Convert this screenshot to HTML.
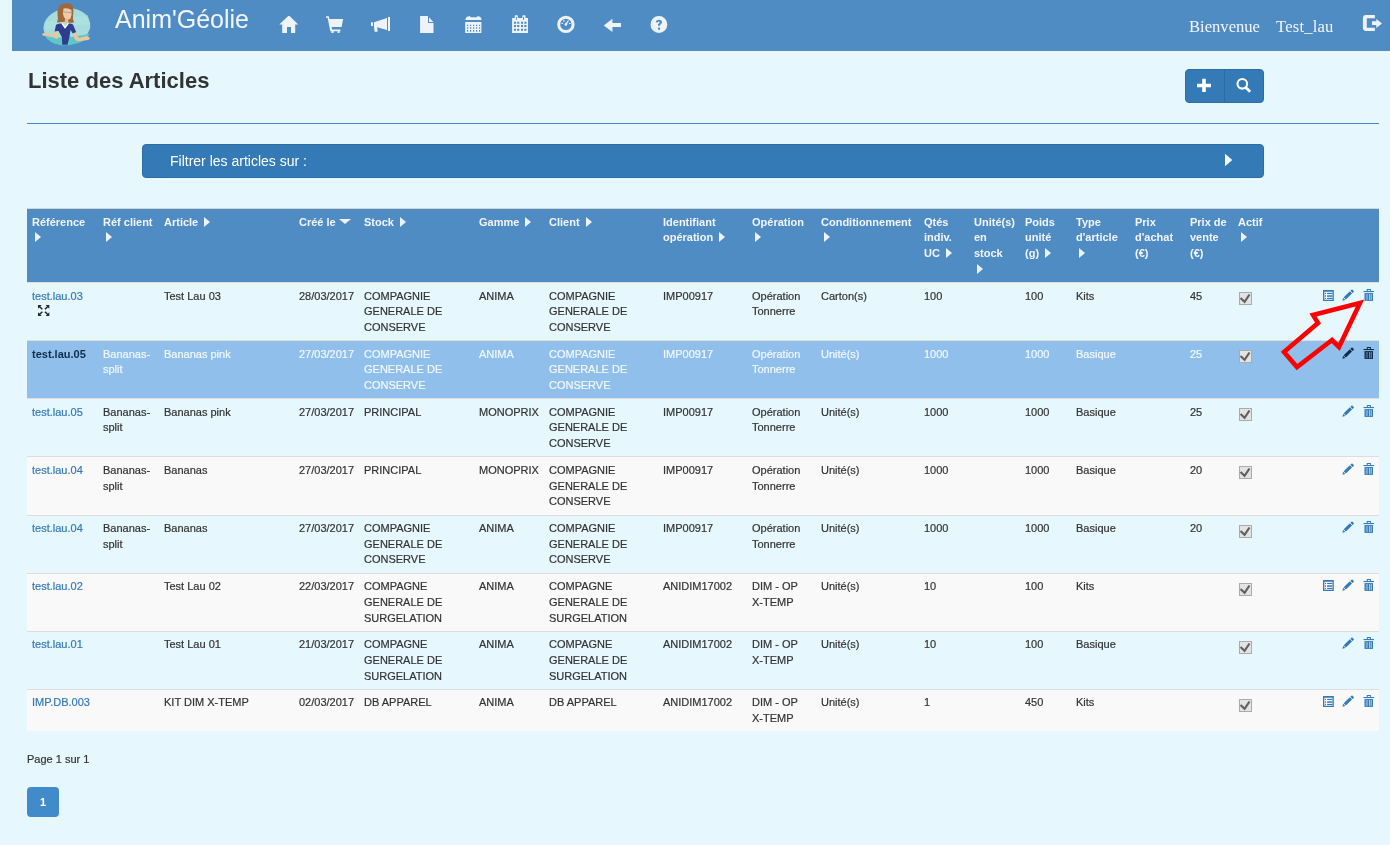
<!DOCTYPE html>
<html><head><meta charset="utf-8">
<style>
*{box-sizing:border-box;}
html,body{margin:0;padding:0;}
body{width:1390px;height:845px;overflow:hidden;background:#e6f8fe;font-family:"Liberation Sans",sans-serif;color:#333;position:relative;font-size:11px;}
.nav{position:absolute;left:12px;top:0;width:1378px;height:51px;background:#508cc4;}
.brand{position:absolute;left:103px;top:4px;font-size:25px;color:#f2f5fa;line-height:30px;white-space:nowrap;}
.welcome{position:absolute;top:17px;font-family:"Liberation Serif",serif;font-size:16.6px;color:#f2f5fa;white-space:nowrap;line-height:20px;}
h1{position:absolute;left:28px;top:66px;margin:0;font-size:22px;font-weight:bold;color:#333;line-height:30px;white-space:nowrap;}
.btng{position:absolute;left:1185px;top:69px;width:79px;height:34px;border:1px solid #2e6da4;border-radius:4px;background:#337ab7;}
.btng .dv{position:absolute;left:38px;top:0;width:1px;height:32px;background:#2e6da4;}
.hr{position:absolute;left:27px;top:123px;width:1352px;height:1px;background:#4a8ac4;}
.filter{position:absolute;left:142px;top:144px;width:1122px;height:34px;background:#337ab7;border:1px solid #2e6da4;border-radius:4px;color:#fff;font-size:14px;}
.filter span{position:absolute;left:27px;top:8px;line-height:17px;white-space:nowrap;}
table{position:absolute;left:27px;top:208px;width:1352px;border-collapse:collapse;table-layout:fixed;}
th,td{padding:5.75px 5px 4.25px 5px;vertical-align:top;text-align:left;line-height:15.71px;font-size:11px;white-space:nowrap;}
th{background:#508cc4;color:#f2f5fa;font-weight:bold;border-top:1px solid #d6d4d2;}
td{border-top:1px solid #dddddd;}
tr.odd td{background:#e6f8fe;}
tr.even td{background:#f9f9f9;}
tr.sel td{background:#8fbfea;color:#f2f8fd;}
tr.sel td.ref{color:#0f2c4c;font-weight:bold;-webkit-text-stroke:0;}
a{color:#337ab7;text-decoration:none;}
.tri{display:inline-block;width:0;height:0;border-top:5.5px solid transparent;border-bottom:5.5px solid transparent;border-left:6px solid #eef3f9;vertical-align:-1px;margin-left:3px;}
.trid{display:inline-block;width:0;height:0;border-left:6px solid transparent;border-right:6px solid transparent;border-top:5px solid #eef3f9;vertical-align:2px;}
.cb{display:block;width:13px;height:13px;border:1px solid #b3b3b3;background:#e3e3e3;margin-top:2px;margin-left:1px;position:relative;}
.cb svg{position:absolute;left:0;top:0;}
.acts{position:relative;height:16px;}
.acts svg{position:absolute;top:3px;}
.page{position:absolute;left:27px;top:752px;line-height:15px;font-size:11px;color:#333;}
.pg{position:absolute;left:27px;top:787px;width:32px;height:30px;background:#428bca;border-radius:4px;color:#fff;font-weight:bold;font-size:11px;text-align:center;line-height:30px;}
#ov{position:absolute;left:0;top:0;}
body>*{will-change:transform;}
td,.page{-webkit-text-stroke:0.2px currentColor;}
</style></head><body>
<div class="nav">
  <div class="brand">Anim'Géolie</div>
</div>
<div class="welcome" style="left:1189px">Bienvenue</div>
<div class="welcome" style="left:1275.5px;letter-spacing:0.2px">Test_lau</div>
<h1>Liste des Articles</h1>
<div class="btng"><div class="dv"></div></div>
<div class="hr"></div>
<div class="filter"><span>Filtrer les articles sur :</span></div>

<table>
<colgroup>
<col style="width:71px"><col style="width:61px"><col style="width:135px"><col style="width:65px"><col style="width:115px"><col style="width:70px"><col style="width:114px"><col style="width:89px"><col style="width:69px"><col style="width:103px"><col style="width:50px"><col style="width:51px"><col style="width:51px"><col style="width:59px"><col style="width:55px"><col style="width:48px"><col style="width:46px"><col>
</colgroup>
<thead><tr>
<th>Référence<br><span class="tri"></span></th>
<th>Réf client<br><span class="tri"></span></th>
<th>Article <span class="tri"></span></th>
<th>Créé le <span class="trid"></span></th>
<th>Stock <span class="tri"></span></th>
<th>Gamme <span class="tri"></span></th>
<th>Client <span class="tri"></span></th>
<th>Identifiant<br>opération <span class="tri"></span></th>
<th>Opération<br><span class="tri"></span></th>
<th>Conditionnement<br><span class="tri"></span></th>
<th>Qtés<br>indiv.<br>UC <span class="tri"></span></th>
<th>Unité(s)<br>en<br>stock<br><span class="tri"></span></th>
<th>Poids<br>unité<br>(g) <span class="tri"></span></th>
<th>Type<br>d'article<br><span class="tri"></span></th>
<th>Prix<br>d'achat<br>(€)</th>
<th>Prix de<br>vente<br>(€)</th>
<th>Actif<br><span class="tri"></span></th>
<th></th>
</tr></thead>
<tbody>
<tr class="odd"><td class="ref"><a>test.lau.03</a></td><td></td><td>Test Lau 03</td><td>28/03/2017</td><td>COMPAGNIE<br>GENERALE DE<br>CONSERVE</td><td>ANIMA</td><td>COMPAGNIE<br>GENERALE DE<br>CONSERVE</td><td>IMP00917</td><td>Opération<br>Tonnerre</td><td>Carton(s)</td><td>100</td><td></td><td>100</td><td>Kits</td><td></td><td>45</td><td></td><td></td></tr>
<tr class="sel"><td class="ref">test.lau.05</td><td>Bananas-<br>split</td><td>Bananas pink</td><td>27/03/2017</td><td>COMPAGNIE<br>GENERALE DE<br>CONSERVE</td><td>ANIMA</td><td>COMPAGNIE<br>GENERALE DE<br>CONSERVE</td><td>IMP00917</td><td>Opération<br>Tonnerre</td><td>Unité(s)</td><td>1000</td><td></td><td>1000</td><td>Basique</td><td></td><td>25</td><td></td><td></td></tr>
<tr class="odd"><td class="ref"><a>test.lau.05</a></td><td>Bananas-<br>split</td><td>Bananas pink</td><td>27/03/2017</td><td>PRINCIPAL</td><td>MONOPRIX</td><td>COMPAGNIE<br>GENERALE DE<br>CONSERVE</td><td>IMP00917</td><td>Opération<br>Tonnerre</td><td>Unité(s)</td><td>1000</td><td></td><td>1000</td><td>Basique</td><td></td><td>25</td><td></td><td></td></tr>
<tr class="even"><td class="ref"><a>test.lau.04</a></td><td>Bananas-<br>split</td><td>Bananas</td><td>27/03/2017</td><td>PRINCIPAL</td><td>MONOPRIX</td><td>COMPAGNIE<br>GENERALE DE<br>CONSERVE</td><td>IMP00917</td><td>Opération<br>Tonnerre</td><td>Unité(s)</td><td>1000</td><td></td><td>1000</td><td>Basique</td><td></td><td>20</td><td></td><td></td></tr>
<tr class="odd"><td class="ref"><a>test.lau.04</a></td><td>Bananas-<br>split</td><td>Bananas</td><td>27/03/2017</td><td>COMPAGNIE<br>GENERALE DE<br>CONSERVE</td><td>ANIMA</td><td>COMPAGNIE<br>GENERALE DE<br>CONSERVE</td><td>IMP00917</td><td>Opération<br>Tonnerre</td><td>Unité(s)</td><td>1000</td><td></td><td>1000</td><td>Basique</td><td></td><td>20</td><td></td><td></td></tr>
<tr class="even"><td class="ref"><a>test.lau.02</a></td><td></td><td>Test Lau 02</td><td>22/03/2017</td><td>COMPAGNE<br>GENERALE DE<br>SURGELATION</td><td>ANIMA</td><td>COMPAGNE<br>GENERALE DE<br>SURGELATION</td><td>ANIDIM17002</td><td>DIM - OP<br>X-TEMP</td><td>Unité(s)</td><td>10</td><td></td><td>100</td><td>Kits</td><td></td><td></td><td></td><td></td></tr>
<tr class="odd"><td class="ref"><a>test.lau.01</a></td><td></td><td>Test Lau 01</td><td>21/03/2017</td><td>COMPAGNE<br>GENERALE DE<br>SURGELATION</td><td>ANIMA</td><td>COMPAGNE<br>GENERALE DE<br>SURGELATION</td><td>ANIDIM17002</td><td>DIM - OP<br>X-TEMP</td><td>Unité(s)</td><td>10</td><td></td><td>100</td><td>Basique</td><td></td><td></td><td></td><td></td></tr>
<tr class="even"><td class="ref"><a>IMP.DB.003</a></td><td></td><td>KIT DIM X-TEMP</td><td>02/03/2017</td><td>DB APPAREL</td><td>ANIMA</td><td>DB APPAREL</td><td>ANIDIM17002</td><td>DIM - OP<br>X-TEMP</td><td>Unité(s)</td><td>1</td><td></td><td>450</td><td>Kits</td><td></td><td></td><td></td><td></td></tr>
</tbody>
</table>

<svg id="ov" width="1390" height="845" viewBox="0 0 1390 845">
<!-- row border fix -->
<rect x="27" y="514" width="1352" height="1" fill="#f9f9f9"/><rect x="27" y="515" width="1352" height="1" fill="#dddddd"/>
<rect x="27" y="572" width="1352" height="1" fill="#e6f8fe"/><rect x="27" y="573" width="1352" height="1" fill="#dddddd"/>
<rect x="27" y="630" width="1352" height="1" fill="#f9f9f9"/><rect x="27" y="631" width="1352" height="1" fill="#dddddd"/>
<!-- logo -->
<g>
 <ellipse cx="66.9" cy="26.6" rx="23.5" ry="18.2" transform="rotate(-9 66.9 26.6)" fill="#a6dcdc"/>
 <path d="M46,22 L88,15 L89,24 L46,30 Z" fill="#b8e4e4" opacity="0.5"/>
 <path d="M45,36 Q66,40 89.5,33.5 Q88,39 80,42.5 Q70,46 60,45 Q49,43 45,36 Z" fill="#5fc6c8"/>
 <path d="M66,3.2 Q71,3 72.8,6.5 Q74,11 73,16 Q72.2,19.5 74.2,22.2 Q70,23.5 66.5,22 L60.5,22 Q57.5,23 57,22 Q58.6,19 57.6,15 Q57,9 60,5.5 Q62.5,3.4 66,3.2 Z" fill="#9f673a"/>
 <path d="M63.5,8.5 Q68,7.5 71.5,10 Q72,15 70.5,18.5 Q68.5,20.5 66,19.5 Q63.5,18 63,14 Z" fill="#eecba4"/>
 <path d="M63.8,12 L71.5,12.6" stroke="#8aa0b8" stroke-width="0.8"/>
 <path d="M65,19 L68,19.5 L68.5,23 L64.5,23.5 Z" fill="#e8bf95"/>
 <path d="M56,24.8 Q60,23 62,23.5 L65,28.5 L68.5,23.5 Q71,23.3 73,24.5 L76.2,32.3 L72.8,33.4 L70.5,30 L69.5,37 L67.5,44.7 L62.3,44.7 L61.8,37 L58.5,31 L54.6,31.8 Z" fill="#2f3d8f"/>
 <path d="M61.2,23.6 L65,28.8 L69,23.6 L67.5,23.3 L65,26.5 L62.8,23.3 Z" fill="#ffffff"/>
 <path d="M54.7,31.8 L58.3,31 L57.8,38 Q57,39.5 55.5,38.6 Q52,36 47.5,35.5 L44,36 Q41.5,35 42.5,33.5 Q45,32.5 48,33 Q51,33.5 54,35.5 Z" fill="#ebc59c"/>
 <path d="M72.8,33.4 L76.2,32.3 Q77,37 79.5,38 Q83,37 86.5,36 Q89.5,36.5 90,38.5 Q89,40.5 86,40.2 Q81,41 77.5,41.3 Q75,40.5 74.3,38 Z" fill="#ebc59c"/>
</g>
<g fill="#eef3f9">
 <!-- home -->
 <path d="M279.3,24.6 L288.2,16 L289.6,16 L298.2,24.6 L295.2,24.6 L295.2,33 L291,33 L291,27 L287,27 L287,33 L282.2,33 L282.2,24.6 Z"/>
 <!-- cart -->
 <path d="M326,16.2 L328.9,16.2 L329.4,19 L343.1,19 L341.6,27 L331.6,27 L332,29.4 L340.4,29.4 L340.4,31.3 L339.6,31.3 L339.6,33 L337.6,33 L337.6,31.3 L333.6,31.3 L333.6,33 L331.4,33 L331.4,31.3 L330.3,31.3 L327.6,17.8 L326,17.8 Z"/>
 <!-- megaphone -->
 <path d="M371,22.2 L372.9,22.2 L372.9,25.9 L371,25.9 Z"/>
 <path d="M374,22.2 L387,18 L387,29.9 L377.2,27.2 L377.6,31.7 L374.6,31.7 L374,27 Z"/>
 <path d="M388,17.1 L390,17.1 L390,30.9 L388,30.9 Z"/>
 <!-- file -->
 <path d="M420.1,16 L428,16 L428,23 L433.5,23 L433.5,33 L420.1,33 Z"/>
 <path d="M429,17.3 L433.3,21.9 L429,21.9 Z"/>
 <!-- calendar 1 -->
 <path d="M465.2,19.9 L466.5,17 L470,16 L470.5,17.3 L477,17.3 L477.5,16 L480.5,17 L481.7,19.9 Z"/>
 <path fill-rule="evenodd" d="M465.2,22.1 L481.4,22.1 L481.4,33 L465.2,33 Z M467,24.8 L468.2,24.8 L468.2,26 L467,26 Z M470,24.8 L471.2,24.8 L471.2,26 L470,26 Z M473,24.8 L474.2,24.8 L474.2,26 L473,26 Z M476,24.8 L477.2,24.8 L477.2,26 L476,26 Z M479,24.8 L480.2,24.8 L480.2,26 L479,26 Z M467,27.2 L468.2,27.2 L468.2,28.8 L467,28.8 Z M470,27.2 L471.2,27.2 L471.2,28.8 L470,28.8 Z M473,27.2 L474.2,27.2 L474.2,28.8 L473,28.8 Z M476,27.2 L477.2,27.2 L477.2,28.8 L476,28.8 Z M479,27.2 L480.2,27.2 L480.2,28.8 L479,28.8 Z M467,30.1 L468.2,30.1 L468.2,31.7 L467,31.7 Z M470,30.1 L471.2,30.1 L471.2,31.7 L470,31.7 Z M473,30.1 L474.2,30.1 L474.2,31.7 L473,31.7 Z M476,30.1 L477.2,30.1 L477.2,31.7 L476,31.7 Z M479,30.1 L480.2,30.1 L480.2,31.7 L479,31.7 Z"/>
 <!-- calendar 2 -->
 <path fill-rule="evenodd" d="M512.1,18 L514.6,18 L515,15.2 L517.6,15.2 L518,18 L522.2,18 L522.6,15.2 L525.2,15.2 L525.6,18 L528,18 L528,32.9 L512.1,32.9 Z M515.9,17 L516.9,17 L516.9,19.8 L515.9,19.8 Z M523,17 L524,17 L524,19.8 L523,19.8 Z M514,21.8 L516,21.8 L516,23.8 L514,23.8 Z M517.2,21.8 L519.3,21.8 L519.3,23.8 L517.2,23.8 Z M521,21.8 L523,21.8 L523,23.8 L521,23.8 Z M524.3,21.8 L526.5,21.8 L526.5,23.8 L524.3,23.8 Z M514,25 L516,25 L516,27 L514,27 Z M517.2,25 L519.3,25 L519.3,27 L517.2,27 Z M521,25 L523,25 L523,27 L521,27 Z M524.3,25 L526.5,25 L526.5,27 L524.3,27 Z M514,28.8 L516,28.8 L516,30.8 L514,30.8 Z M517.2,28.8 L519.3,28.8 L519.3,30.8 L517.2,30.8 Z M521,28.8 L523,28.8 L523,30.8 L521,30.8 Z M524.3,28.8 L526.5,28.8 L526.5,30.8 L524.3,30.8 Z"/>
 <!-- dashboard -->
 <path fill-rule="evenodd" d="M565.9,15.8 A8.7,8.6 0 1 1 565.9,33 A8.7,8.6 0 1 1 565.9,15.8 Z M565.9,18.7 A5.7,5.7 0 1 0 565.9,30.1 A5.7,5.7 0 1 0 565.9,18.7 Z"/>
 <circle cx="565.9" cy="24.4" r="1.3"/>
 <path d="M565.3,24 L568,20.2 L569,20.8 L566.5,24.8 Z"/>
 <rect x="563.2" y="20.3" width="1.4" height="1.4"/>
 <rect x="561.4" y="22.9" width="1.6" height="1.1"/>
 <rect x="569" y="22.9" width="1.6" height="1.1"/>
 <!-- arrow left -->
 <path d="M603.8,25.4 L612.4,18.8 L612.4,22.9 L621,22.9 L621,26.9 L612.4,26.9 L612.4,31.9 Z"/>
 <!-- question -->
 <path fill-rule="evenodd" d="M658.9,16 A8.4,8.45 0 1 1 658.9,32.9 A8.4,8.45 0 1 1 658.9,16 Z M655.8,22.3 Q655.8,19.8 659,19.8 Q662,19.8 662,22.3 Q662,23.8 660.4,24.6 L660,25.8 L658,25.8 L658,24.2 Q659.6,23.2 659.6,22.4 Q659.6,21.6 658.8,21.6 Q658,21.6 658,22.6 Z M658,27.4 L660,27.4 L660,29.8 L658,29.8 Z"/>
 <!-- logout -->
 <path d="M1366,14.9 L1374.9,14.9 L1374.9,18.2 L1367,18.2 Q1366.8,18.2 1366.8,18.6 L1366.8,27.4 Q1366.8,27.8 1367.2,27.8 L1374.9,27.8 L1374.9,30.9 L1366,30.9 Q1362.9,30.9 1362.9,27.8 L1362.9,18 Q1362.9,14.9 1366,14.9 Z"/>
 <path d="M1372,21.2 L1376.3,21.2 L1376.3,18.9 L1382,23.4 L1376.3,28 L1376.3,24.9 L1372,24.9 Z"/>
</g>
<g fill="#ffffff">
 <!-- plus -->
 <path d="M1202.2,78.8 L1205.8,78.8 L1205.8,83.7 L1211,83.7 L1211,87.3 L1205.8,87.3 L1205.8,92 L1202.2,92 L1202.2,87.3 L1197,87.3 L1197,83.7 L1202.2,83.7 Z"/>
 <!-- filter triangle -->
 <path d="M1225,153.8 L1232.3,160 L1225,166.3 Z"/>
</g>
<g fill="none" stroke="#ffffff">
 <circle cx="1242.3" cy="83.8" r="4.8" stroke-width="2.1"/>
 <path d="M1245.8,87.4 L1250.2,91.8" stroke-width="2.8"/>
</g>
<g transform="translate(1239,292)"><rect x="0.5" y="0.5" width="12" height="12" fill="#e3e3e3" stroke="#ababab" stroke-width="1"/><path d="M1.5,6 L5.6,9.9 L10.5,2.5" fill="none" stroke="#616161" stroke-width="2.2"/></g>
<g transform="translate(1323,290)" fill="#337ab7"><path fill-rule="evenodd" d="M0,0 H10.8 V10.9 H0 Z M1.3,1.7 H9.5 V9.7 H1.3 Z"/><rect x="1.9" y="2.9" width="1.1" height="1.1"/><rect x="4.1" y="2.9" width="5.2" height="1.1"/><rect x="1.9" y="5.3" width="1.1" height="1.5"/><rect x="4.1" y="5.3" width="5.2" height="1.5"/><rect x="1.9" y="7.9" width="1.1" height="1.1"/><rect x="4.1" y="7.9" width="5.2" height="1.1"/></g>
<g transform="translate(1342.4,300.7) rotate(-44)" fill="#337ab7"><path d="M0,0 L2.6,-1.55 L2.6,1.55 Z"/><rect x="3.3" y="-1.55" width="8.6" height="3.1"/><rect x="12.6" y="-1.55" width="2.3" height="3.1" rx="0.4"/></g>
<g transform="translate(1363.5,289)" fill="#337ab7"><path fill-rule="evenodd" d="M3.3,0 H7.4 V2 H3.3 Z M4.3,1 H6.4 V2 H4.3 Z"/><rect x="0" y="2" width="10.5" height="1.1"/><rect x="1" y="4.1" width="8.5" height="7.8"/><rect x="2.2" y="5" width="2.3" height="6" fill="#e6f8fe" opacity="0.35"/><rect x="5.5" y="5" width="0.8" height="6" fill="#e6f8fe" opacity="0.8"/><rect x="7.2" y="5" width="0.9" height="6" fill="#e6f8fe" opacity="0.8"/></g>
<g transform="translate(1239,350)"><rect x="0.5" y="0.5" width="12" height="12" fill="#e3e3e3" stroke="#ababab" stroke-width="1"/><path d="M1.5,6 L5.6,9.9 L10.5,2.5" fill="none" stroke="#616161" stroke-width="2.2"/></g>
<g transform="translate(1342.4,358.7) rotate(-44)" fill="#0f2c4c"><path d="M0,0 L2.6,-1.55 L2.6,1.55 Z"/><rect x="3.3" y="-1.55" width="8.6" height="3.1"/><rect x="12.6" y="-1.55" width="2.3" height="3.1" rx="0.4"/></g>
<g transform="translate(1363.5,347)" fill="#0f2c4c"><path fill-rule="evenodd" d="M3.3,0 H7.4 V2 H3.3 Z M4.3,1 H6.4 V2 H4.3 Z"/><rect x="0" y="2" width="10.5" height="1.1"/><rect x="1" y="4.1" width="8.5" height="7.8"/><rect x="2.2" y="5" width="2.3" height="6" fill="#8fbfea" opacity="0.35"/><rect x="5.5" y="5" width="0.8" height="6" fill="#8fbfea" opacity="0.8"/><rect x="7.2" y="5" width="0.9" height="6" fill="#8fbfea" opacity="0.8"/></g>
<g transform="translate(1239,408)"><rect x="0.5" y="0.5" width="12" height="12" fill="#e3e3e3" stroke="#ababab" stroke-width="1"/><path d="M1.5,6 L5.6,9.9 L10.5,2.5" fill="none" stroke="#616161" stroke-width="2.2"/></g>
<g transform="translate(1342.4,416.7) rotate(-44)" fill="#337ab7"><path d="M0,0 L2.6,-1.55 L2.6,1.55 Z"/><rect x="3.3" y="-1.55" width="8.6" height="3.1"/><rect x="12.6" y="-1.55" width="2.3" height="3.1" rx="0.4"/></g>
<g transform="translate(1363.5,405)" fill="#337ab7"><path fill-rule="evenodd" d="M3.3,0 H7.4 V2 H3.3 Z M4.3,1 H6.4 V2 H4.3 Z"/><rect x="0" y="2" width="10.5" height="1.1"/><rect x="1" y="4.1" width="8.5" height="7.8"/><rect x="2.2" y="5" width="2.3" height="6" fill="#e6f8fe" opacity="0.35"/><rect x="5.5" y="5" width="0.8" height="6" fill="#e6f8fe" opacity="0.8"/><rect x="7.2" y="5" width="0.9" height="6" fill="#e6f8fe" opacity="0.8"/></g>
<g transform="translate(1239,466)"><rect x="0.5" y="0.5" width="12" height="12" fill="#e3e3e3" stroke="#ababab" stroke-width="1"/><path d="M1.5,6 L5.6,9.9 L10.5,2.5" fill="none" stroke="#616161" stroke-width="2.2"/></g>
<g transform="translate(1342.4,474.7) rotate(-44)" fill="#337ab7"><path d="M0,0 L2.6,-1.55 L2.6,1.55 Z"/><rect x="3.3" y="-1.55" width="8.6" height="3.1"/><rect x="12.6" y="-1.55" width="2.3" height="3.1" rx="0.4"/></g>
<g transform="translate(1363.5,463)" fill="#337ab7"><path fill-rule="evenodd" d="M3.3,0 H7.4 V2 H3.3 Z M4.3,1 H6.4 V2 H4.3 Z"/><rect x="0" y="2" width="10.5" height="1.1"/><rect x="1" y="4.1" width="8.5" height="7.8"/><rect x="2.2" y="5" width="2.3" height="6" fill="#f9f9f9" opacity="0.35"/><rect x="5.5" y="5" width="0.8" height="6" fill="#f9f9f9" opacity="0.8"/><rect x="7.2" y="5" width="0.9" height="6" fill="#f9f9f9" opacity="0.8"/></g>
<g transform="translate(1239,525)"><rect x="0.5" y="0.5" width="12" height="12" fill="#e3e3e3" stroke="#ababab" stroke-width="1"/><path d="M1.5,6 L5.6,9.9 L10.5,2.5" fill="none" stroke="#616161" stroke-width="2.2"/></g>
<g transform="translate(1342.4,532.7) rotate(-44)" fill="#337ab7"><path d="M0,0 L2.6,-1.55 L2.6,1.55 Z"/><rect x="3.3" y="-1.55" width="8.6" height="3.1"/><rect x="12.6" y="-1.55" width="2.3" height="3.1" rx="0.4"/></g>
<g transform="translate(1363.5,521)" fill="#337ab7"><path fill-rule="evenodd" d="M3.3,0 H7.4 V2 H3.3 Z M4.3,1 H6.4 V2 H4.3 Z"/><rect x="0" y="2" width="10.5" height="1.1"/><rect x="1" y="4.1" width="8.5" height="7.8"/><rect x="2.2" y="5" width="2.3" height="6" fill="#e6f8fe" opacity="0.35"/><rect x="5.5" y="5" width="0.8" height="6" fill="#e6f8fe" opacity="0.8"/><rect x="7.2" y="5" width="0.9" height="6" fill="#e6f8fe" opacity="0.8"/></g>
<g transform="translate(1239,583)"><rect x="0.5" y="0.5" width="12" height="12" fill="#e3e3e3" stroke="#ababab" stroke-width="1"/><path d="M1.5,6 L5.6,9.9 L10.5,2.5" fill="none" stroke="#616161" stroke-width="2.2"/></g>
<g transform="translate(1323,580)" fill="#337ab7"><path fill-rule="evenodd" d="M0,0 H10.8 V10.9 H0 Z M1.3,1.7 H9.5 V9.7 H1.3 Z"/><rect x="1.9" y="2.9" width="1.1" height="1.1"/><rect x="4.1" y="2.9" width="5.2" height="1.1"/><rect x="1.9" y="5.3" width="1.1" height="1.5"/><rect x="4.1" y="5.3" width="5.2" height="1.5"/><rect x="1.9" y="7.9" width="1.1" height="1.1"/><rect x="4.1" y="7.9" width="5.2" height="1.1"/></g>
<g transform="translate(1342.4,590.7) rotate(-44)" fill="#337ab7"><path d="M0,0 L2.6,-1.55 L2.6,1.55 Z"/><rect x="3.3" y="-1.55" width="8.6" height="3.1"/><rect x="12.6" y="-1.55" width="2.3" height="3.1" rx="0.4"/></g>
<g transform="translate(1363.5,579)" fill="#337ab7"><path fill-rule="evenodd" d="M3.3,0 H7.4 V2 H3.3 Z M4.3,1 H6.4 V2 H4.3 Z"/><rect x="0" y="2" width="10.5" height="1.1"/><rect x="1" y="4.1" width="8.5" height="7.8"/><rect x="2.2" y="5" width="2.3" height="6" fill="#f9f9f9" opacity="0.35"/><rect x="5.5" y="5" width="0.8" height="6" fill="#f9f9f9" opacity="0.8"/><rect x="7.2" y="5" width="0.9" height="6" fill="#f9f9f9" opacity="0.8"/></g>
<g transform="translate(1239,641)"><rect x="0.5" y="0.5" width="12" height="12" fill="#e3e3e3" stroke="#ababab" stroke-width="1"/><path d="M1.5,6 L5.6,9.9 L10.5,2.5" fill="none" stroke="#616161" stroke-width="2.2"/></g>
<g transform="translate(1342.4,648.7) rotate(-44)" fill="#337ab7"><path d="M0,0 L2.6,-1.55 L2.6,1.55 Z"/><rect x="3.3" y="-1.55" width="8.6" height="3.1"/><rect x="12.6" y="-1.55" width="2.3" height="3.1" rx="0.4"/></g>
<g transform="translate(1363.5,637)" fill="#337ab7"><path fill-rule="evenodd" d="M3.3,0 H7.4 V2 H3.3 Z M4.3,1 H6.4 V2 H4.3 Z"/><rect x="0" y="2" width="10.5" height="1.1"/><rect x="1" y="4.1" width="8.5" height="7.8"/><rect x="2.2" y="5" width="2.3" height="6" fill="#e6f8fe" opacity="0.35"/><rect x="5.5" y="5" width="0.8" height="6" fill="#e6f8fe" opacity="0.8"/><rect x="7.2" y="5" width="0.9" height="6" fill="#e6f8fe" opacity="0.8"/></g>
<g transform="translate(1239,699)"><rect x="0.5" y="0.5" width="12" height="12" fill="#e3e3e3" stroke="#ababab" stroke-width="1"/><path d="M1.5,6 L5.6,9.9 L10.5,2.5" fill="none" stroke="#616161" stroke-width="2.2"/></g>
<g transform="translate(1323,696)" fill="#337ab7"><path fill-rule="evenodd" d="M0,0 H10.8 V10.9 H0 Z M1.3,1.7 H9.5 V9.7 H1.3 Z"/><rect x="1.9" y="2.9" width="1.1" height="1.1"/><rect x="4.1" y="2.9" width="5.2" height="1.1"/><rect x="1.9" y="5.3" width="1.1" height="1.5"/><rect x="4.1" y="5.3" width="5.2" height="1.5"/><rect x="1.9" y="7.9" width="1.1" height="1.1"/><rect x="4.1" y="7.9" width="5.2" height="1.1"/></g>
<g transform="translate(1342.4,706.7) rotate(-44)" fill="#337ab7"><path d="M0,0 L2.6,-1.55 L2.6,1.55 Z"/><rect x="3.3" y="-1.55" width="8.6" height="3.1"/><rect x="12.6" y="-1.55" width="2.3" height="3.1" rx="0.4"/></g>
<g transform="translate(1363.5,695)" fill="#337ab7"><path fill-rule="evenodd" d="M3.3,0 H7.4 V2 H3.3 Z M4.3,1 H6.4 V2 H4.3 Z"/><rect x="0" y="2" width="10.5" height="1.1"/><rect x="1" y="4.1" width="8.5" height="7.8"/><rect x="2.2" y="5" width="2.3" height="6" fill="#f9f9f9" opacity="0.35"/><rect x="5.5" y="5" width="0.8" height="6" fill="#f9f9f9" opacity="0.8"/><rect x="7.2" y="5" width="0.9" height="6" fill="#f9f9f9" opacity="0.8"/></g>
<g transform="translate(38,305)" fill="#262626"><g><path d="M0,0 L3.7,0 L0,3.7 Z"/><path d="M1.9,0.9 L4.9,3.7 L3.8,4.8 L0.9,1.9 Z"/></g><g transform="translate(11.3,0) scale(-1,1)"><path d="M0,0 L3.7,0 L0,3.7 Z"/><path d="M1.9,0.9 L4.9,3.7 L3.8,4.8 L0.9,1.9 Z"/></g><g transform="translate(0,11) scale(1,-1)"><path d="M0,0 L3.7,0 L0,3.7 Z"/><path d="M1.9,0.9 L4.9,3.7 L3.8,4.8 L0.9,1.9 Z"/></g><g transform="translate(11.3,11) scale(-1,-1)"><path d="M0,0 L3.7,0 L0,3.7 Z"/><path d="M1.9,0.9 L4.9,3.7 L3.8,4.8 L0.9,1.9 Z"/></g></g>
<!-- red arrow -->
<path d="M1360,303 L1313,315 L1318,323 L1284,352 L1297,367 L1332,340 L1339,347 Z" fill="none" stroke="#ff0000" stroke-width="4.6" stroke-linejoin="miter" stroke-miterlimit="10"/>
</svg>

<div class="page">Page 1 sur 1</div>
<div class="pg">1</div>
</body></html>
